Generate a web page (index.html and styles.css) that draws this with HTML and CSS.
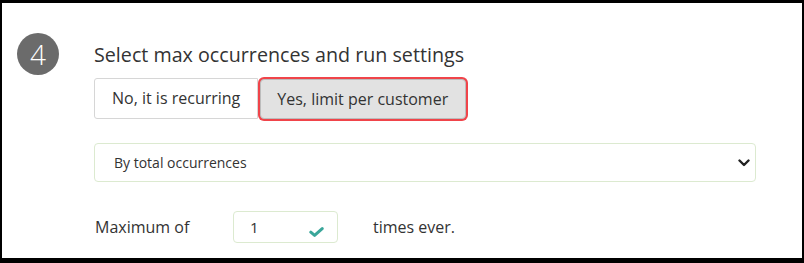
FILE: index.html
```html
<!DOCTYPE html>
<html>
<head>
<meta charset="utf-8">
<link rel="stylesheet" href="styles.css">
</head>
<body>
<div class="frame">
  <div class="step">4</div>
  <div class="content">
    <h2 class="title">Select max occurrences and run settings</h2>
    <div class="toggle">
      <div class="opt">No, it is recurring</div>
      <div class="opt active">Yes, limit per customer</div>
    </div>
    <div class="select">
      <span>By total occurrences</span>
      <svg class="chev" width="12" height="8" viewBox="0 0 12 8"><path d="M1.5 1.5 L6 6 L10.5 1.5" fill="none" stroke="#222" stroke-width="2.4" stroke-linecap="round" stroke-linejoin="round"/></svg>
    </div>
    <div class="maxrow">
      <span class="lbl">Maximum of</span>
      <div class="num">
        <span>1</span>
        <svg class="check" width="15" height="10" viewBox="0 0 15 10"><path d="M1.8 5.2 L5.6 8.4 L13.2 1.6" fill="none" stroke="#3aa69a" stroke-width="3" stroke-linecap="round" stroke-linejoin="round"/></svg>
      </div>
      <span class="lbl2">times ever.</span>
    </div>
  </div>
</div>
</body>
</html>
```

FILE: styles.css
```css
html, body {
  margin: 0;
  padding: 0;
  background: #000;
}
body {
  width: 804px;
  height: 263px;
  overflow: hidden;
  font-family: "Open Sans", "Liberation Sans", sans-serif;
  color: #333;
}
.frame {
  box-sizing: border-box;
  width: 804px;
  height: 263px;
  background: #fff;
  border-style: solid;
  border-color: #000;
  border-width: 3px 2px 5px 2px;
  display: flex;
  align-items: flex-start;
  padding: 30px 0 0 15px;
}
.step {
  width: 42px;
  height: 42px;
  border-radius: 50%;
  background: #6b6b6b;
  color: #fff;
  font-size: 28px;
  font-weight: 300;
  line-height: 42px;
  text-align: center;
  flex: none;
}
.content {
  margin-left: 35px;
  width: 662px;
}
.title {
  margin: 10px 0 0 0;
  font-size: 19.7px;
  font-weight: 400;
  line-height: 24px;
  color: #333;
}
.toggle {
  display: flex;
  margin-top: 11px;
}
.opt {
  box-sizing: border-box;
  height: 41px;
  padding: 0 17px;
  font-size: 16px;
  line-height: 39px;
  border: 1px solid #d6d6d6;
  background: #fff;
  border-radius: 3px 0 0 3px;
  color: #333;
}
.opt.active {
  background: #e2e2e2;
  border: 1px solid #bcbcbc;
  border-radius: 4px;
  box-shadow: 0 0 0 2px #f0444a;
  margin: 1px 0 0 2px;
  padding: 0 17px 0 16px;
  height: 40px;
  line-height: 38px;
}
.select {
  box-sizing: border-box;
  margin-top: 24px;
  height: 39px;
  border: 1px solid #dcead0;
  border-radius: 4px;
  display: flex;
  align-items: center;
  justify-content: space-between;
  padding: 0 5px 0 19px;
  font-size: 14px;
  color: #333;
}
.chev {
  display: block;
  margin-top: 1px;
}
.maxrow {
  display: flex;
  align-items: center;
  margin-top: 29px;
  font-size: 16px;
}
.lbl {
  width: 139px;
  padding-left: 1px;
  box-sizing: border-box;
}
.num {
  box-sizing: border-box;
  width: 105px;
  height: 32px;
  border: 1px solid #dcead0;
  border-radius: 4px;
  display: flex;
  align-items: center;
  justify-content: space-between;
  padding: 0 13px 0 16px;
  font-size: 15px;
}
.check {
  display: block;
  margin-top: 9px;
}
.lbl2 {
  margin-left: 35px;
}
```
